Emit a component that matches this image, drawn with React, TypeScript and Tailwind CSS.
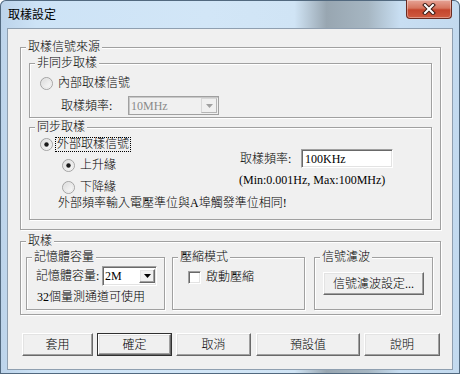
import React from 'react';

const sunken =
  'border border-t-[#a0a0a0] border-l-[#a0a0a0] border-r-white border-b-white shadow-[inset_1px_1px_0_#696969,inset_-1px_-1px_0_#e3e3e3]';
const raised =
  'border border-t-white border-l-white border-r-[#696969] border-b-[#696969] shadow-[inset_-1px_-1px_0_#a0a0a0,inset_1px_1px_0_#e3e3e3]';

function Group({ title, className = '', children }: { title: string; className?: string; children?: React.ReactNode }) {
  return (
    <fieldset className={`border border-[#a0a0a0] shadow-[inset_1px_1px_0_#fff,1px_1px_0_#fff] p-0 min-w-0 ${className}`}>
      <legend className="ml-[5px] px-[2px] bg-[#f0f0f0] leading-[14px]">{title}</legend>
      {children}
    </fieldset>
  );
}

function Radio({ checked = false }: { checked?: boolean }) {
  return (
    <svg width="13" height="13" viewBox="0 0 13 13" className="shrink-0">
      <defs>
        <linearGradient id="rg" x1="0" y1="0" x2="1" y2="1">
          <stop offset="0" stopColor="#d8d8d8" />
          <stop offset="1" stopColor="#ffffff" />
        </linearGradient>
      </defs>
      <circle cx="6.5" cy="6.5" r="6" fill="url(#rg)" stroke="#a3a3a3" />
      <circle cx="6.5" cy="6.5" r="4.6" fill="none" stroke="#e6e6e6" />
      {checked && <circle cx="6.5" cy="6.5" r="2.2" fill="#1a1a1a" />}
    </svg>
  );
}

function Arrow({ color = '#000' }: { color?: string }) {
  return (
    <svg width="7" height="4" viewBox="0 0 7 4">
      <path d="M0 0h7L3.5 4z" fill={color} />
    </svg>
  );
}

function Btn({ label, w, isDefault = false, className = '' }: { label: string; w: string; isDefault?: boolean; className?: string }) {
  const face = (
    <div className={`${raised} h-full flex items-center justify-center bg-[#f0f0f0]`}>{label}</div>
  );
  return (
    <div className={`${w} h-[23px] ${isDefault ? 'border border-[#303030]' : ''} ${className}`}>{face}</div>
  );
}

export default function App() {
  return (
    <div className="w-[460px] h-[374px] overflow-hidden flex flex-col rounded-t-[6px] shadow-[inset_0_0_0_1px_#52697f] bg-[linear-gradient(90deg,#bcd3ea_0%,#cde3f6_8%,#d2e6f7_45%,#d0e4f5_64%,#98a6b1_71%,#a6b6c2_80%,#c8def2_87%,#c3daef_100%)] font-['Liberation_Serif','Noto_Sans_CJK_TC',serif] font-light text-[12px] leading-[14px] text-black">
      {/* title bar */}
      <div className="h-[28px] shrink-0 flex items-start">
        <span className="ml-[8px] mt-[7px] font-['Noto_Sans_CJK_TC',sans-serif] font-normal">取樣設定</span>
        <div className="ml-auto mr-[8px] w-[46px] h-[19px] rounded-b-[4px] border border-t-0 border-[#6b2a20] bg-[linear-gradient(180deg,#e6a497_0%,#d6755f_45%,#c4452d_55%,#d05a3f_100%)] shadow-[inset_0_0_0_1px_rgba(255,255,255,0.35)] flex items-center justify-center">
          <svg width="14" height="12" viewBox="0 0 14 12">
            <path d="M3 2l8 8M11 2l-8 8" stroke="#3b1a14" strokeWidth="4" strokeLinecap="square" />
            <path d="M3 2l8 8M11 2l-8 8" stroke="#ffffff" strokeWidth="2" strokeLinecap="square" />
          </svg>
        </div>
      </div>

      {/* client */}
      <div className="ml-[7px] w-[446px] h-[342px] shrink-0 border border-[#8f9fb0] bg-[#f0f0f0] pt-[11px] pl-[12px]">
        <Group title="取樣信號來源" className="w-[421px] h-[190px]">
          <div className="px-[8px] pt-[2px]">
            <Group title="非同步取樣" className="h-[62px]">
              <div className="mt-[6px] h-[14px] pl-[10px] flex items-center gap-[5px]">
                <Radio />
                <span>內部取樣信號</span>
              </div>
              <div className="mt-[6px] pl-[31px] flex items-center">
                <span className="w-[67px]">取樣頻率:</span>
                <div className="w-[91px] h-[19px] border border-[#a0a0a0] shadow-[inset_1px_1px_0_#c8c8c8] bg-[#f0f0f0] flex items-center">
                  <span className="pl-[2px] flex-1 text-[#8a8a8a]">10MHz</span>
                  <div className="w-[16px] h-[15px] mr-[1px] border border-[#d8d8d8] border-r-[#b4b4b4] border-b-[#b4b4b4] bg-[#f0f0f0] flex items-center justify-center">
                    <Arrow color="#a0a0a0" />
                  </div>
                </div>
              </div>
            </Group>

            <Group title="同步取樣" className="mt-[2px] h-[100px]">
              <div className="flex">
                <div className="w-[209px]">
                  <div className="mt-[3px] h-[15px] pl-[10px] flex items-center">
                    <Radio checked />
                    <span className="ml-[2px] px-[1px] border border-dotted border-black leading-[13px]">外部取樣信號</span>
                  </div>
                  <div className="mt-[6px] h-[14px] pl-[32px] flex items-center gap-[5px]">
                    <Radio checked />
                    <span>上升緣</span>
                  </div>
                  <div className="mt-[8px] h-[14px] pl-[32px] flex items-center gap-[5px]">
                    <Radio />
                    <span>下降緣</span>
                  </div>
                </div>
                <div>
                  <div className="mt-[15px] flex items-center">
                    <span className="ml-[1px] w-[61px]">取樣頻率:</span>
                    <div className={`${sunken} w-[92px] h-[19px] bg-white pl-[3px] flex items-center`}>100KHz</div>
                  </div>
                  <div className="mt-[5px]">(Min:0.001Hz, Max:100MHz)</div>
                </div>
              </div>
              <div className="mt-[2px] pl-[28px]">外部頻率輸入電壓準位與A埠觸發準位相同!</div>
            </Group>
          </div>
        </Group>

        <Group title="取樣" className="mt-[4px] w-[421px] h-[81px]">
          <div className="flex pt-[2px] pl-[5px]">
            <Group title="記憶體容量" className="w-[139px] h-[60px]">
              <div className="mt-[2px] pl-[9px] flex items-center">
                <span className="w-[66px]">記憶體容量:</span>
                <div className={`${sunken} w-[55px] h-[20px] bg-white flex items-center`}>
                  <span className="pl-[2px] flex-1">2M</span>
                  <div className={`${raised} w-[16px] h-[14px] mr-[1px] bg-[#f0f0f0] flex items-center justify-center`}>
                    <Arrow />
                  </div>
                </div>
              </div>
              <div className="mt-[4px] pl-[10px]">32個量測通道可使用</div>
            </Group>
            <Group title="壓縮模式" className="ml-[7px] w-[133px] h-[60px]">
              <div className="mt-[6px] pl-[15px] flex items-center gap-[5px]">
                <div className={`${sunken} w-[13px] h-[13px] bg-white`} />
                <span>啟動壓縮</span>
              </div>
            </Group>
            <Group title="信號濾波" className="ml-[9px] w-[119px] h-[60px]">
              <div className="mt-[8px] ml-[8px]">
                <Btn label="信號濾波設定..." w="w-[101px]" />
              </div>
            </Group>
          </div>
        </Group>

        <div className="mt-[18px] pl-[2px] flex">
          <Btn label="套用" w="w-[71px]" />
          <Btn label="確定" w="w-[75px]" isDefault className="ml-[4px]" />
          <Btn label="取消" w="w-[75px]" className="ml-[4px]" />
          <Btn label="預設值" w="w-[104px]" className="ml-[5px]" />
          <Btn label="說明" w="w-[76px]" className="ml-[4px]" />
        </div>
      </div>
    </div>
  );
}
